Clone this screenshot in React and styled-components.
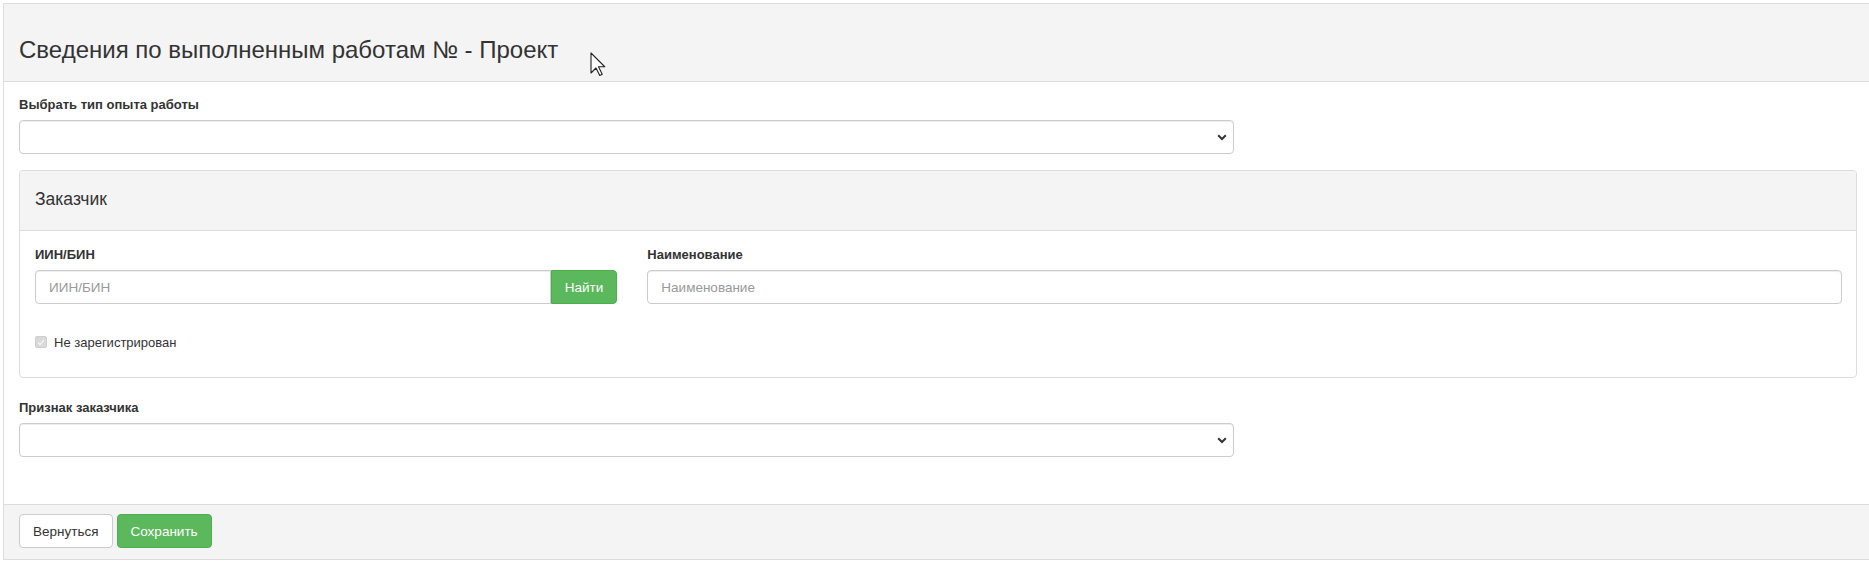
import styled, { createGlobalStyle } from 'styled-components'

const GlobalStyle = createGlobalStyle`
  * { box-sizing: border-box; }
  body {
    margin: 0;
    background: #fff;
    font-family: "Liberation Sans", Arial, sans-serif;
    color: #333;
    overflow: hidden;
  }
`

const Page = styled.div`
  padding: 3px 0 0 3px;
`

const Panel = styled.div`
  position: relative;
  width: 1870px;
  border: 1px solid #ddd;
  background: #fff;
`

const PanelHeading = styled.div`
  background: #f4f4f4;
  border-bottom: 1px solid #ddd;
  padding: 33px 15px 18px 15px;
`

const Title = styled.h3`
  margin: 0;
  font-size: 24px;
  line-height: 26px;
  font-weight: 400;
  color: #333;
`

const Cursor = styled.svg`
  position: absolute;
  left: 586px;
  top: 48px;
`

const PanelBody = styled.div`
  padding: 15px 15px 47px 15px;
`

const Label = styled.label`
  display: block;
  font-size: 13px;
  line-height: 15px;
  font-weight: 700;
  color: #333;
  margin-bottom: 8px;
  margin-top: ${p => p.$top || 0}px;
`

const SelectWrap = styled.div`
  position: relative;
  width: 1215px;
`

const Select = styled.select`
  display: block;
  width: 100%;
  height: 34px;
  border: 1px solid #ccc;
  border-radius: 4px;
  background: #fff;
  box-shadow: inset 0 1px 1px rgba(0, 0, 0, 0.075);
  appearance: none;
  font-family: inherit;
  font-size: 13px;
  padding: 0 12px;
`

const Chevron = styled.svg`
  position: absolute;
  right: 7px;
  top: 14px;
  pointer-events: none;
`

const SubPanel = styled.div`
  margin-top: 16px;
  border: 1px solid #ddd;
  border-radius: 4px;
  overflow: hidden;
`

const SubHeading = styled.div`
  background: #f4f4f4;
  border-bottom: 1px solid #ddd;
  padding: 18px 15px 21px 15px;
`

const SubTitle = styled.div`
  font-size: 17.5px;
  line-height: 20px;
  color: #333;
`

const SubBody = styled.div`
  padding: 16px 14px 27px 15px;
`

const Row = styled.div`
  display: grid;
  grid-template-columns: calc((100% + 30px) / 3 - 30px) 1fr;
  column-gap: 30px;
`

const InputGroup = styled.div`
  display: flex;
`

const Input = styled.input`
  display: block;
  flex: 1;
  width: 100%;
  min-width: 0;
  height: 34px;
  border: 1px solid #ccc;
  border-radius: ${p => (p.$joined ? '4px 0 0 4px' : '4px')};
  box-shadow: inset 0 1px 1px rgba(0, 0, 0, 0.075);
  padding: 0 13px;
  font-family: inherit;
  font-size: 13.5px;
  color: #555;
  outline: none;
  &::placeholder { color: #999; }
`

const Button = styled.button`
  height: 34px;
  padding: 0 ${p => (p.$pad != null ? p.$pad : 13)}px;
  font-family: inherit;
  font-size: 13.5px;
  border: 1px solid ${p => (p.$green ? '#4cae4c' : '#ccc')};
  background: ${p => (p.$green ? '#5cb85c' : '#fff')};
  color: ${p => (p.$green ? '#fff' : '#333')};
  border-radius: ${p => (p.$joined ? '0 4px 4px 0' : '4px')};
  cursor: pointer;
`

const CheckRow = styled.div`
  display: flex;
  align-items: center;
  gap: 7px;
  margin-top: 30px;
  height: 16px;
  font-size: 13px;
  color: #333;
`

const CheckBox = styled.span`
  display: inline-flex;
  align-items: center;
  justify-content: center;
  width: 12px;
  height: 12px;
  border-radius: 2px;
  background: #d9d9d9;
  border: 1px solid #cfcfcf;
`

const Footer = styled.div`
  display: flex;
  gap: 4px;
  background: #f4f4f4;
  border-top: 1px solid #ddd;
  padding: 9px 15px 11px 15px;
`

const App = () => {
  return (
    <>
      <GlobalStyle />
      <Page>
        <Panel>
          <PanelHeading>
            <Title>Сведения по выполненным работам № - Проект</Title>
          </PanelHeading>
          <Cursor width="16" height="25" viewBox="0 0 16 25">
            <path d="M1 1 L1 21 L6 16 L9.75 23.5 L12.25 22.25 L8.5 14.75 L14.75 14.75 Z" fill="#fff" stroke="#222" strokeWidth="1.1" strokeLinejoin="round" />
          </Cursor>
          <PanelBody>
            <Label>Выбрать тип опыта работы</Label>
            <SelectWrap>
              <Select defaultValue="">
                <option value=""></option>
              </Select>
              <Chevron width="10" height="7" viewBox="0 0 10 7">
                <path d="M1.2 1.3 L5 5 L8.8 1.3" fill="none" stroke="#333" strokeWidth="2" />
              </Chevron>
            </SelectWrap>

            <SubPanel>
              <SubHeading>
                <SubTitle>Заказчик</SubTitle>
              </SubHeading>
              <SubBody>
                <Row>
                  <div>
                    <Label>ИИН/БИН</Label>
                    <InputGroup>
                      <Input $joined placeholder="ИИН/БИН" />
                      <Button $green $joined $pad={13}>Найти</Button>
                    </InputGroup>
                  </div>
                  <div>
                    <Label>Наименование</Label>
                    <Input placeholder="Наименование" />
                  </div>
                </Row>
                <CheckRow>
                  <CheckBox>
                    <svg width="8" height="7" viewBox="0 0 8 7">
                      <path d="M1 3.6 L3 5.6 L7 1" fill="none" stroke="#f4f4f4" strokeWidth="1.4" />
                    </svg>
                  </CheckBox>
                  Не зарегистрирован
                </CheckRow>
              </SubBody>
            </SubPanel>

            <Label $top={22}>Признак заказчика</Label>
            <SelectWrap>
              <Select defaultValue="">
                <option value=""></option>
              </Select>
              <Chevron width="10" height="7" viewBox="0 0 10 7">
                <path d="M1.2 1.3 L5 5 L8.8 1.3" fill="none" stroke="#333" strokeWidth="2" />
              </Chevron>
            </SelectWrap>
          </PanelBody>
          <Footer>
            <Button>Вернуться</Button>
            <Button $green>Сохранить</Button>
          </Footer>
        </Panel>
      </Page>
    </>
  )
}

export default App
